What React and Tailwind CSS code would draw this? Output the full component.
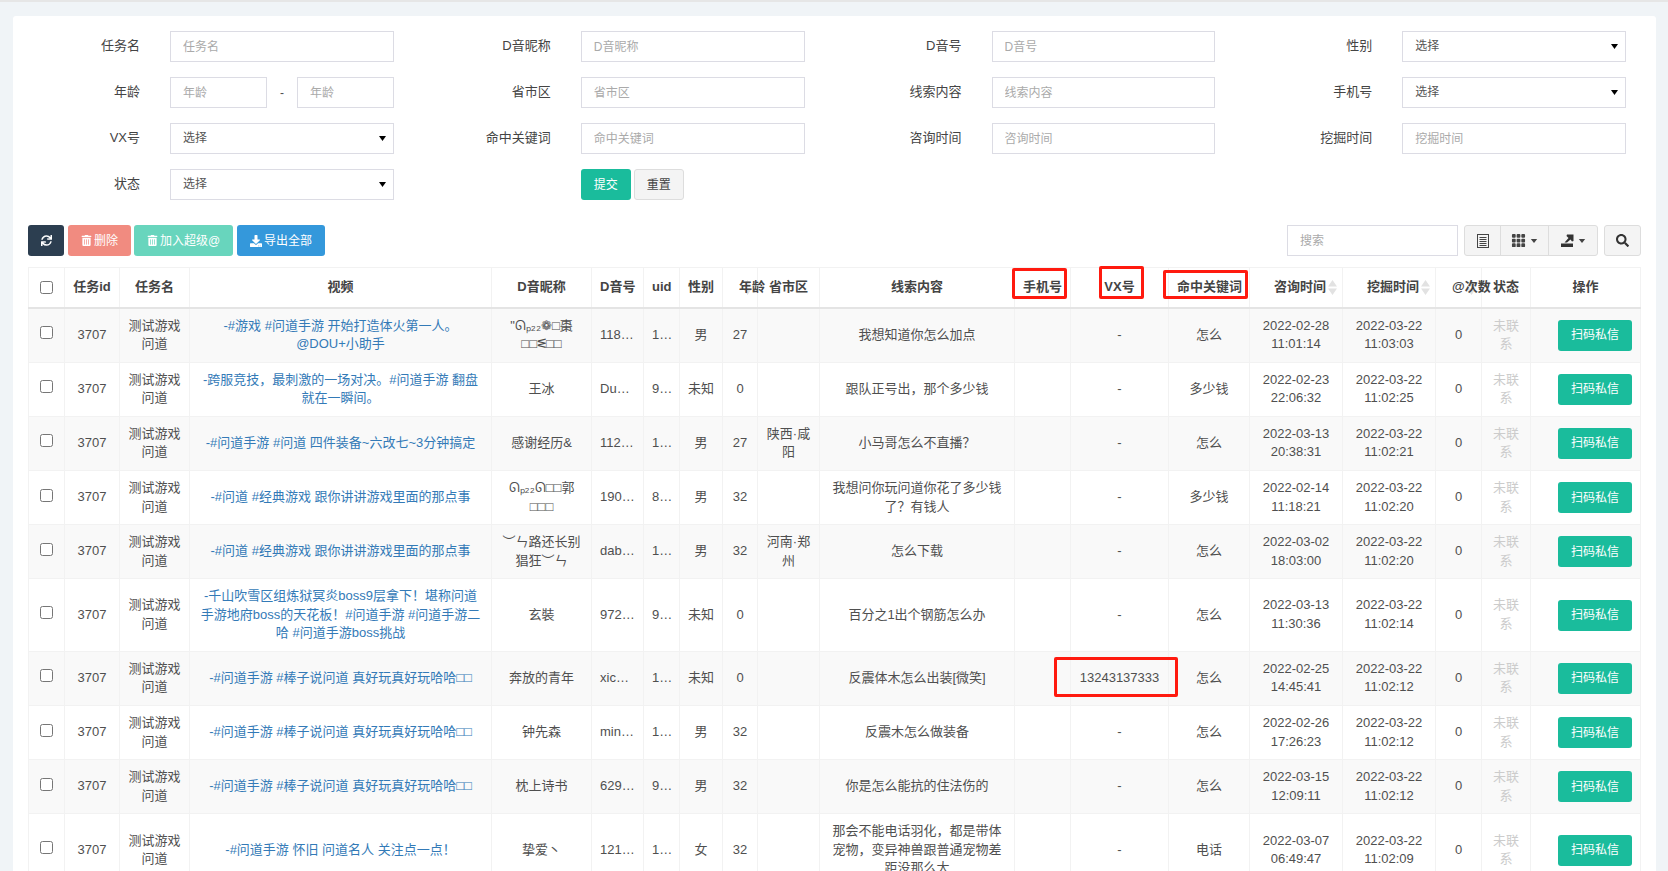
import React from "react";
import { FaSync, FaTrashAlt, FaDownload, FaSearch } from "react-icons/fa";
import { BsGrid3X3GapFill } from "react-icons/bs";

const widths = [36, 55, 70, 302, 100, 52, 36, 43, 35, 62, 195, 56, 98, 81, 93, 93, 46, 49, 110];

const heads = [
  { t: "任务id" },
  { t: "任务名" },
  { t: "视频" },
  { t: "D音昵称" },
  { t: "D音号" },
  { t: "uid" },
  { t: "性别" },
  { t: "年龄", sort: true },
  { t: "省市区" },
  { t: "线索内容" },
  { t: "手机号" },
  { t: "VX号" },
  { t: "命中关键词" },
  { t: "咨询时间", sort: true },
  { t: "挖掘时间", sort: true },
  { t: "@次数", sort: true },
  { t: "状态" },
  { t: "操作" },
];

const video7 = "-#问道手游 #棒子说问道 真好玩真好玩哈哈□□";

const rows = [
  { video: "-#游戏 #问道手游 开始打造体火第一人。 @DOU+小助手", nick: '"ᘏₚ₂₂❁□棗 □□ᓬ□□', dy: "118203344", uid: "1039", sex: "男", age: 27, area: "", clue: "我想知道你怎么加点", vx: "-", key: "怎么", t1: "2022-02-28 11:01:14", t2: "2022-03-22 11:03:03" },
  { video: "-跨服竞技，最刺激的一场对决。#问道手游 翻盘就在一瞬间。", nick: "王冰", dy: "Du20881", uid: "9281", sex: "未知", age: 0, area: "", clue: "跟队正号出，那个多少钱", vx: "-", key: "多少钱", t1: "2022-02-23 22:06:32", t2: "2022-03-22 11:02:25" },
  { video: "-#问道手游 #问道 四件装备~六改七~3分钟搞定", nick: "感谢经历&", dy: "112093871", uid: "1720", sex: "男", age: 27, area: "陕西·咸阳", clue: "小马哥怎么不直播？", vx: "-", key: "怎么", t1: "2022-03-13 20:38:31", t2: "2022-03-22 11:02:21" },
  { video: "-#问道 #经典游戏 跟你讲讲游戏里面的那点事", nick: "ᘏₚ₂₂ᘏ□□郭 □□□", dy: "190338216", uid: "8392", sex: "男", age: 32, area: "", clue: "我想问你玩问道你花了多少钱了？有钱人", vx: "-", key: "多少钱", t1: "2022-02-14 11:18:21", t2: "2022-03-22 11:02:20" },
  { video: "-#问道 #经典游戏 跟你讲讲游戏里面的那点事", nick: "︶ㄣ路还长别猖狂︶ㄣ", dy: "dab20394", uid: "1084", sex: "男", age: 32, area: "河南·郑州", clue: "怎么下载", vx: "-", key: "怎么", t1: "2022-03-02 18:03:00", t2: "2022-03-22 11:02:20" },
  { video: "-千山吹雪区组炼狱冥炎boss9层拿下！堪称问道手游地府boss的天花板！#问道手游 #问道手游二哈 #问道手游boss挑战", nick: "玄裝", dy: "972018443", uid: "9127", sex: "未知", age: 0, area: "", clue: "百分之1出个钢筋怎么办", vx: "-", key: "怎么", t1: "2022-03-13 11:30:36", t2: "2022-03-22 11:02:14" },
  { video: video7, nick: "奔放的青年", dy: "xic20018", uid: "1530", sex: "未知", age: 0, area: "", clue: "反震体木怎么出装[微笑]", vx: "13243137333", key: "怎么", t1: "2022-02-25 14:45:41", t2: "2022-03-22 11:02:12" },
  { video: video7, nick: "钟先森", dy: "min88213", uid: "1692", sex: "男", age: 32, area: "", clue: "反震木怎么做装备", vx: "-", key: "怎么", t1: "2022-02-26 17:26:23", t2: "2022-03-22 11:02:12" },
  { video: video7, nick: "枕上诗书", dy: "629017733", uid: "9044", sex: "男", age: 32, area: "", clue: "你是怎么能抗的住法伤的", vx: "-", key: "怎么", t1: "2022-03-15 12:09:11", t2: "2022-03-22 11:02:12" },
  { video: "-#问道手游 怀旧 问道名人 关注点一点！", nick: "挚爱丶", dy: "121440982", uid: "1273", sex: "女", age: 32, area: "", clue: "那会不能电话羽化，都是带体宠物，变异神兽跟普通宠物差距没那么大", vx: "-", key: "电话", t1: "2022-03-07 06:49:47", t2: "2022-03-22 11:02:09" },
];

const inputCls =
  "block h-[31px] w-full border border-[#dcdce4] bg-white px-3 text-xs text-[#555] outline-none placeholder:text-[#aaa]";

const Field = ({ label, children }) => (
  <div className="flex items-center pr-[30px]">
    <label className="mr-[30px] w-[127px] shrink-0 text-right text-[13px] text-[#444]">{label}</label>
    <div className="flex min-w-0 flex-1 items-center">{children}</div>
  </div>
);

const TextField = ({ label, hint }) => (
  <Field label={label}>
    <input className={inputCls} placeholder={hint || label} />
  </Field>
);

const SelectField = ({ label }) => (
  <Field label={label}>
    <div className="relative w-full">
      <select className={`${inputCls} appearance-none pb-[2px]`}>
        <option>选择</option>
      </select>
      <svg viewBox="0 0 7 5" className="pointer-events-none absolute right-[8px] top-[13px] h-[5px] w-[7px] fill-black">
        <path d="M0 0h7L3.5 5z" />
      </svg>
    </div>
  </Field>
);

const Caret = () => (
  <svg viewBox="0 0 8 5" className="ml-[4px] h-[4px] w-[8px] fill-[#444]">
    <path d="M0 0h8L4 5z" />
  </svg>
);

const SortIcon = () => (
  <svg viewBox="0 0 9 15" className="absolute right-[5px] top-[12px] h-[15px] w-[9px] fill-[#e2e2e2]">
    <path d="M4.5 0L9 6.5H0zM0 8.5h9L4.5 15z" />
  </svg>
);

const Projects = () => (
  <div className="h-[871px] overflow-hidden border-t-2 border-[#e6e6e6] bg-[#f0f4f7] pl-[13px] pr-[12px] pt-[14px] text-[13px] leading-[18.57px] text-[#4f4f4f] [font-family:'Liberation_Sans','Noto_Sans_CJK_SC',sans-serif]">
    <div className="rounded-[3px] bg-white pb-4 pt-[15px]">
      <div className="grid grid-cols-4 gap-y-[15px]">
        <TextField label="任务名" />
        <TextField label="D音昵称" />
        <TextField label="D音号" />
        <SelectField label="性别" />

        <Field label="年龄">
          <input className={inputCls} placeholder="年龄" />
          <span className="w-[30px] shrink-0 text-center text-xs">-</span>
          <input className={inputCls} placeholder="年龄" />
        </Field>
        <TextField label="省市区" />
        <TextField label="线索内容" />
        <SelectField label="手机号" />

        <SelectField label="VX号" />
        <TextField label="命中关键词" />
        <TextField label="咨询时间" />
        <TextField label="挖掘时间" />

        <SelectField label="状态" />
        <Field label="">
          <button className="h-[31px] w-[50px] rounded-[3px] bg-[#1abc9c] text-xs text-white">提交</button>
          <button className="ml-[3px] h-[31px] w-[50px] rounded-[3px] border border-[#ddd] bg-[#f4f4f4] text-xs text-[#444]">重置</button>
        </Field>
      </div>

      <div className="mx-[15px] mt-[25px] flex items-center">
        <button className="flex h-[31px] w-[36px] items-center justify-center rounded-[3px] bg-[#2c3e50] text-white">
          <FaSync className="h-[11px] w-[11px]" />
        </button>
        <button className="ml-[4px] flex h-[31px] w-[63px] items-center justify-center gap-[2px] rounded-[3px] bg-[#f18b80] text-xs text-white">
          <FaTrashAlt className="h-[11px] w-[11px]" />
          删除
        </button>
        <button className="ml-[3px] flex h-[31px] w-[99px] items-center justify-center gap-[2px] rounded-[3px] bg-[#68d5bd] text-xs text-white">
          <FaTrashAlt className="h-[11px] w-[11px]" />
          加入超级@
        </button>
        <button className="ml-[4px] flex h-[31px] w-[88px] items-center justify-center gap-[2px] rounded-[3px] bg-[#3498db] text-xs text-white">
          <FaDownload className="h-[12px] w-[12px]" />
          导出全部
        </button>

        <input className="ml-auto block h-[31px] w-[171px] border border-[#dcdce4] bg-white px-3 text-xs outline-none placeholder:text-[#aaa]" placeholder="搜索" />
        <div className="ml-[6px] flex h-[31px] divide-x divide-[#ddd] rounded-[3px] border border-[#ddd] bg-[#f4f4f4] text-[#333]">
          <button className="flex w-[36px] items-center justify-center">
            <svg viewBox="0 0 12 14" className="h-[14px] w-[12px] fill-none stroke-[#444]">
              <rect x="0.5" y="0.5" width="11" height="13" strokeWidth="1" />
              <path d="M2.5 3.5h7M2.5 5.5h7M2.5 7.5h7M2.5 9.5h7M2.5 11.5h7" strokeWidth="1" />
            </svg>
          </button>
          <button className="flex w-[48px] items-center justify-center">
            <BsGrid3X3GapFill className="h-[15px] w-[15px] text-[#444]" />
            <Caret />
          </button>
          <button className="flex w-[48px] items-center justify-center">
            <svg viewBox="0 0 13 13" className="h-[13px] w-[13px] fill-[#333]">
              <path d="M0 9.5h12V13H0zM3.5 8.5L7.5 4 5.5 2 6 .5h6.5V7L11 7.5 9.5 5.5 6 8.5z" />
            </svg>
            <Caret />
          </button>
        </div>
        <button className="ml-[6px] flex h-[31px] w-[37px] items-center justify-center rounded-[3px] border border-[#ddd] bg-[#f4f4f4] text-[#333]">
          <FaSearch className="h-[13px] w-[13px]" />
        </button>
      </div>

      <div className="relative mx-[15px] mt-[11px]">
        <table className="w-full table-fixed">
          <colgroup>
            {widths.map((w, i) => (
              <col key={i} style={{ width: w }} />
            ))}
          </colgroup>
          <thead>
            <tr className="border-b-2 border-[#e4e4e4]">
              <th className="border border-b-2 border-[#f2f2f2] border-b-[#e4e4e4] py-[10px]">
                <input type="checkbox" className="block mx-auto" />
              </th>
              {heads.map((h) => (
                <th
                  key={h.t}
                  className={`relative whitespace-nowrap border border-b-2 border-[#f2f2f2] border-b-[#e4e4e4] py-[10px] text-center font-bold text-[#444] ${h.sort ? "pl-4 pr-2" : "px-2"}`}
                >
                  {h.sort && <SortIcon />}
                  <span className="relative">{h.t}</span>
                </th>
              ))}
            </tr>
          </thead>
          <tbody>
            {rows.map((r, i) => (
              <tr key={i} className="odd:bg-[#f9f9f9] [&>td]:border [&>td]:border-[#f2f2f2] [&>td]:p-2 [&>td]:text-center">
                <td>
                  <input type="checkbox" className="block mx-auto -mt-[5px]" />
                </td>
                <td>3707</td>
                <td>测试游戏问道</td>
                <td className="text-[#337ab7]">{r.video}</td>
                <td>{r.nick}</td>
                <td className="truncate">{r.dy}</td>
                <td className="truncate">{r.uid}</td>
                <td>{r.sex}</td>
                <td>{r.age}</td>
                <td>{r.area}</td>
                <td>{r.clue}</td>
                <td></td>
                <td>{r.vx}</td>
                <td>{r.key}</td>
                <td>{r.t1}</td>
                <td>{r.t2}</td>
                <td>0</td>
                <td className="text-[#ccc]">未联系</td>
                <td className="!text-right">
                  <button className="h-[31px] w-[74px] rounded-[3px] bg-[#1abc9c] text-xs text-white">扫码私信</button>
                </td>
              </tr>
            ))}
          </tbody>
        </table>

        {/* red annotation boxes drawn over the table */}
        <div className="absolute left-[984px] top-[1px] h-[31px] w-[55px] rounded-[2px] border-[3px] border-[#ff1a0f]" />
        <div className="absolute left-[1071px] top-[-1px] h-[33px] w-[45px] rounded-[2px] border-[3px] border-[#ff1a0f]" />
        <div className="absolute left-[1135px] top-[3px] h-[29px] w-[85px] rounded-[2px] border-[3px] border-[#ff1a0f]" />
        <div className="absolute left-[1026px] top-[390px] h-[40px] w-[124px] rounded-[2px] border-[3px] border-[#ff1a0f]" />
      </div>
    </div>
  </div>
);

export default Projects;
